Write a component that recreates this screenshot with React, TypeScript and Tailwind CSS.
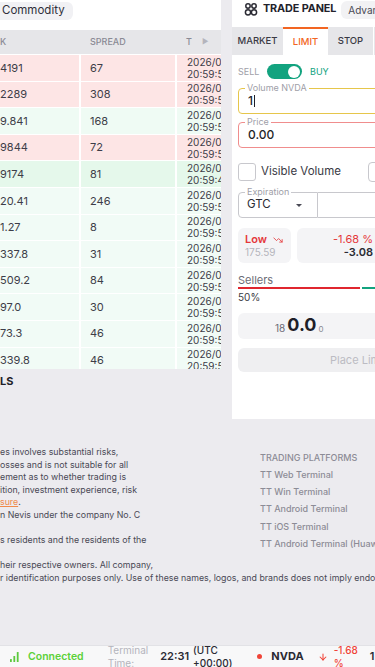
import { TrendingDown, ArrowDown } from "lucide-react"

const rows = [
  { a: "4191", s: "67", t: "20:59:58", c: "bg-[#fde5e5]" },
  { a: "2289", s: "308", t: "20:59:57", c: "bg-[#fde5e5]" },
  { a: "9.841", s: "168", t: "20:59:56", c: "bg-[#effbf4]" },
  { a: "9844", s: "72", t: "20:59:55", c: "bg-[#fde5e5]" },
  { a: "9174", s: "81", t: "20:59:49", c: "bg-[#e5f8eb]" },
  { a: "20.41", s: "246", t: "20:59:54", c: "bg-[#f1fbf6]" },
  { a: "1.27", s: "8", t: "20:59:53", c: "bg-[#f1fbf6]" },
  { a: "337.8", s: "31", t: "20:59:52", c: "bg-[#f1fbf6]" },
  { a: "509.2", s: "84", t: "20:59:52", c: "bg-[#f1fbf6]" },
  { a: "97.0", s: "30", t: "20:59:51", c: "bg-[#f1fbf6]" },
  { a: "73.3", s: "46", t: "20:59:50", c: "bg-[#f1fbf6]" },
  { a: "339.8", s: "46", t: "20:59:50", c: "bg-[#f1fbf6]" },
]

const disclaimer = [
  "es involves substantial risks,",
  "osses and is not suitable for all",
  "ement as to whether trading is",
  "ition, investment experience, risk",
  null,
  "n Nevis under the company No. C",
  "",
  "s residents and the residents of the",
  "",
  "heir respective owners. All company,",
  "r identification purposes only. Use of these names, logos, and brands does not imply endorsement.",
]

const platforms = [
  "TT Web Terminal",
  "TT Win Terminal",
  "TT Android Terminal",
  "TT iOS Terminal",
  "TT Android Terminal (Huawei)",
]

function PanelIcon() {
  return (
    <svg width="14" height="13" viewBox="0 0 14 13" fill="none" stroke="#2a2a33" strokeWidth="1.5">
      <circle cx="4" cy="3" r="2.2" />
      <circle cx="10" cy="3" r="2.2" />
      <circle cx="4" cy="9.3" r="2.6" />
      <circle cx="10" cy="9.3" r="2.6" />
    </svg>
  )
}

function Signal() {
  return (
    <svg width="9" height="10" viewBox="0 0 9 10" fill="#5cc93c">
      <rect x="0" y="7" width="1.8" height="3" rx="0.5" />
      <rect x="3.4" y="4" width="1.8" height="6" rx="0.5" />
      <rect x="6.8" y="0" width="1.8" height="10" rx="0.5" />
    </svg>
  )
}

export default function App() {
  return (
    <div
      className="w-[375px] h-[667px] overflow-hidden bg-[#ecebef] flex flex-col text-[#2f2f3a]"
      style={{ fontFamily: "Inter, 'Noto Sans', sans-serif" }}
    >
      {/* top area */}
      <div className="flex items-start h-[420px] shrink-0">
        {/* market list */}
        <div className="w-[221px] shrink-0 flex flex-col">
          <div className="bg-white h-[369px] flex flex-col">
            <div className="h-[30px] flex items-start pt-[2px]">
              <div className="h-[18px] px-[2px] pr-[8px] bg-[#f1f1f4] rounded-r-md flex items-center text-[11.5px] text-[#2f2f3a]">
                Commodity
              </div>
            </div>
            <div className="h-[24px] bg-[#e6e6e9] flex items-center text-[9px] text-[#8a8a94] font-medium">
              <div className="w-[81px]">K</div>
              <div className="w-[96px] pl-[9px]">SPREAD</div>
              <div className="pl-[9px] flex items-center gap-[10px]">
                <span>T</span>
                <span className="text-[7px] text-[#b4b4bc]">▶</span>
              </div>
            </div>
            <div className="h-[315px] overflow-hidden pt-[1px]">
              {rows.map((r, i) => (
                <div key={i} className="flex h-[26.6px] border-b-[1.6px] border-white text-[11px] text-[#3d3d48]">
                  <div className={`w-[79px] ${r.c} flex items-center`}>{r.a}</div>
                  <div className="w-[2px] bg-white" />
                  <div className={`w-[94px] ${r.c} flex items-center pl-[9px]`}>{r.s}</div>
                  <div className="w-[2px] bg-white" />
                  <div className={`w-[44px] ${r.c} flex flex-col justify-center pl-[10px] overflow-hidden text-[10px] leading-[12px] whitespace-nowrap`}>
                    <span>2026/03/01</span>
                    <span>{r.t}</span>
                  </div>
                </div>
              ))}
            </div>
          </div>
          <div className="h-[24px] flex items-center text-[11px] font-bold text-[#1f1f28]">LS</div>
        </div>

        <div className="w-[11px] shrink-0" />

        {/* trade panel */}
        <div className="w-[260px] shrink-0 h-[419px] bg-white flex flex-col">
          <div className="h-[27px] flex items-start">
            <div className="flex items-center h-[19px] pl-[12px] gap-[5px]">
              <PanelIcon />
              <span className="text-[10.8px] font-bold text-[#22222b] tracking-[-0.1px]">TRADE PANEL</span>
            </div>
            <div className="ml-[5px] mt-[1px] h-[18px] px-[7px] rounded-md bg-[#f2f2f4] flex items-center text-[10px] text-[#4a4a55]">
              Advanced
            </div>
          </div>
          <div className="h-[28px] flex bg-[#e6e6e9] text-[9.5px] font-medium">
            <div className="w-[51px] flex items-center justify-center text-[#3a3a44]">MARKET</div>
            <div className="w-[45px] bg-white border-t-2 border-[#f26522] flex items-center justify-center text-[#f26522]">
              LIMIT
            </div>
            <div className="w-[45px] flex items-center justify-center text-[#3a3a44]">STOP</div>
            <div className="w-[1px] bg-white" />
          </div>

          <div className="px-[6px] flex flex-col">
            <div className="mt-[9px] h-[15px] flex items-center text-[9px]">
              <span className="text-[#a0a0a8] w-[29px]">SELL</span>
              <div className="w-[35px] h-[15px] rounded-full bg-[#12a37f] flex items-center justify-end pr-[2px]">
                <div className="w-[12px] h-[12px] rounded-full bg-white" />
              </div>
              <span className="ml-[8px] text-[#12a37f]">BUY</span>
            </div>

            <div className="relative mt-[9px] h-[26px] border-[1.5px] border-[#e6c64b] rounded-[4px] flex items-center pl-[9px] text-[12px] font-medium text-[#1f1f28]">
              <span className="absolute -top-[6px] left-[6px] bg-white px-[2px] text-[9px] font-normal text-[#a0a0a8] leading-[10px]">
                Volume NVDA
              </span>
              1<span className="w-[1px] h-[12px] bg-[#1f1f28] ml-[1px]" />
            </div>

            <div className="relative mt-[8px] h-[26px] border-[1.5px] border-[#f08d8d] rounded-[4px] flex items-center pl-[9px] text-[12px] font-medium text-[#1f1f28]">
              <span className="absolute -top-[6px] left-[6px] bg-white px-[2px] text-[9px] font-normal text-[#a0a0a8] leading-[10px]">
                Price
              </span>
              0.00
            </div>

            <div className="mt-[14px] h-[19px] flex items-center">
              <div className="w-[18px] h-[18px] border border-[#c8c8cd] rounded-[3px]" />
              <span className="ml-[5px] text-[11.5px] text-[#3a3a44]">Visible Volume</span>
              <div className="ml-[27px] w-[22px] h-[20px] border border-[#c8c8cd] rounded-[4px]" />
            </div>

            <div className="mt-[11px] h-[26px] flex">
              <div className="relative w-[80px] border border-[#c8c8cd] rounded-l-[4px] flex items-center pl-[8px] pr-[15px] justify-between text-[11.5px] text-[#2a2a33]">
                <span className="absolute -top-[6px] left-[6px] bg-white px-[2px] text-[9px] text-[#a0a0a8] leading-[10px]">
                  Expiration
                </span>
                GTC
                <span className="w-0 h-0 border-l-[3px] border-r-[3px] border-t-[3px] border-l-transparent border-r-transparent border-t-[#4a4a55]" />
              </div>
              <div className="flex-1 border border-l-0 border-[#c8c8cd] rounded-r-[4px]" />
            </div>

            <div className="mt-[10px] h-[35px] flex gap-[6px]">
              <div className="w-[53px] bg-[#f4f4f6] rounded-md flex flex-col justify-center pl-[7px]">
                <div className="flex items-center gap-[6px] text-[11px] font-semibold text-[#e5383b] leading-[13px]">
                  Low <TrendingDown size={10} strokeWidth={2} />
                </div>
                <span className="text-[10px] text-[#b4b4bc] leading-[12px]">175.59</span>
              </div>
              <div className="w-[86px] bg-[#f4f4f6] rounded-md flex flex-col justify-center items-end pr-[10px]">
                <span className="text-[11px] text-[#e5383b] leading-[13px]">-1.68 %</span>
                <span className="text-[11px] font-semibold text-[#2a2a33] leading-[13px]">-3.08</span>
              </div>
            </div>

            <div className="mt-[11px] h-[12px] flex items-center text-[11px] leading-[12px] text-[#6b6b75]">Sellers</div>
            <div className="mt-[1px] h-[2px] flex gap-[2px]">
              <div className="w-[122px] bg-[#e0262f]" />
              <div className="flex-1 bg-[#12a37f]" />
            </div>
            <div className="mt-[2px] h-[12px] flex items-center text-[10px] leading-[12px] text-[#3a3a44]">50%</div>

            <div className="mt-[10px] h-[26px] bg-[#f4f4f6] rounded-md flex items-end pb-[4px] pl-[37px]">
              <span className="text-[10px] text-[#6b6b75] leading-[14px]">18</span>
              <span className="ml-[2px] text-[18px] font-bold text-[#1e1e28] leading-[20px]">0.0</span>
              <span className="ml-[2px] text-[8px] text-[#8a8a94] leading-[12px]">0</span>
            </div>

            <div className="mt-[9px] h-[24px] bg-[#efeff1] rounded-md flex items-center pl-[92px] text-[11px] text-[#bcbcc3] whitespace-nowrap">
              Place Limit Buy Order
            </div>
          </div>
        </div>
      </div>

      {/* footer */}
      <div className="flex-1 pt-[26px] flex items-start">
        <div className="w-[221px] shrink-0 text-[8.8px] leading-[12.6px] text-[#4a4955] whitespace-nowrap">
          {disclaimer.map((l, i) =>
            l === null ? (
              <div key={i} className="h-[12.6px]">
                <span className="text-[#f08a4b] underline">sure</span>.
              </div>
            ) : (
              <div key={i} className="h-[12.6px]">{l}</div>
            )
          )}
        </div>
        <div className="ml-[39px] mt-[3px] flex flex-col text-[9px] text-[#8c8c96] whitespace-nowrap font-medium">
          <div className="h-[17.2px] flex items-center">TRADING PLATFORMS</div>
          {platforms.map((p) => (
            <div key={p} className="h-[17.2px] flex items-center">{p}</div>
          ))}
        </div>
      </div>

      {/* status bar */}
      <div className="h-[22px] shrink-0 bg-[#f8f8f9] border-t border-[#e2e2e6] flex items-center whitespace-nowrap">
        <div className="ml-[10px]">
          <Signal />
        </div>
        <span className="ml-[9px] text-[10.5px] font-semibold text-[#5cd13a]">Connected</span>
        <div className="ml-[24px] flex flex-col text-[10px] leading-[13px] text-[#b4b4bc]">
          <span>Terminal</span>
          <span>Time:</span>
        </div>
        <span className="ml-[12px] text-[11px] font-semibold text-[#2a2a33]">22:31</span>
        <div className="ml-[4px] flex flex-col text-[10px] leading-[13px] text-[#2a2a33] font-medium">
          <span>(UTC</span>
          <span>+00:00)</span>
        </div>
        <div className="ml-[25px] w-[5px] h-[5px] rounded-full bg-[#f04438]" />
        <span className="ml-[9px] text-[11px] font-bold text-[#2a2a33]">NVDA</span>
        <ArrowDown size={10} className="ml-[14px] text-[#f04438]" strokeWidth={2.5} />
        <div className="ml-[6px] flex flex-col text-[10px] leading-[13px] text-[#f04438] font-medium">
          <span>-1.68</span>
          <span>%</span>
        </div>
        <span className="ml-[12px] text-[11px] font-semibold text-[#2a2a33]">1</span>
      </div>
    </div>
  )
}
